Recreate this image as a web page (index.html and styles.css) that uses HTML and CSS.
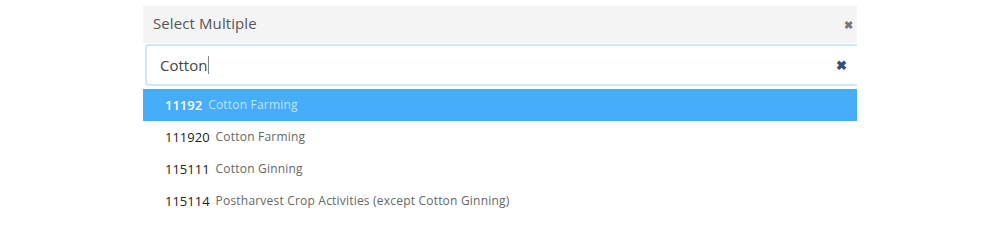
FILE: index.html
```html
<!DOCTYPE html>
<html>
<head>
<meta charset="utf-8">
<link rel="stylesheet" href="styles.css">
</head>
<body>
<div class="select">
  <div class="select-head">
    <span class="placeholder">Select Multiple</span>
    <span class="head-clear">&#10006;</span>
  </div>
  <div class="search-wrap">
    <div class="search">
      <span class="search-text">Cotton</span><span class="caret"></span>
      <span class="search-clear">&#10006;</span>
    </div>
  </div>
  <ul class="results">
    <li class="result active"><span class="code">11192</span><span class="desc">Cotton Farming</span></li>
    <li class="result"><span class="code">111920</span><span class="desc">Cotton Farming</span></li>
    <li class="result"><span class="code">115111</span><span class="desc">Cotton Ginning</span></li>
    <li class="result"><span class="code">115114</span><span class="desc">Postharvest Crop Activities (except Cotton Ginning)</span></li>
  </ul>
</div>
</body>
</html>
```
FILE: styles.css
```css
html, body {
  margin: 0;
  padding: 0;
  background: #ffffff;
}
body {
  font-family: "Open Sans", "Lato", sans-serif;
  padding-top: 6px;
}
.select {
  width: 714px;
  margin-left: 143px;
}
.select-head {
  height: 37px;
  background: #f4f4f4;
  display: flex;
  align-items: center;
  justify-content: space-between;
  padding: 0 4px 4px 10px;
  box-sizing: border-box;
}
.placeholder {
  font-size: 15px;
  letter-spacing: 0.1px;
  color: #555555;
}
.head-clear {
  font-size: 11px;
  color: #777777;
  font-weight: bold;
  margin-top: 3px;
}
.search-wrap {
  padding: 1px 0 3px 2px;
}
.search {
  border: 2px solid #cde7fb;
  border-right: none;
  border-radius: 4px 0 0 4px;
  display: flex;
  align-items: center;
  padding: 0 0 1px 13px;
  background: #fff;
  box-sizing: border-box;
  height: 42px;
}
.search-text {
  font-size: 15px;
  color: #444444;
}
.caret {
  width: 1px;
  height: 18px;
  background: #888;
  margin-left: 1px;
}
.search-clear {
  margin-left: auto;
  margin-right: 10px;
  font-size: 13px;
  color: #2f4d8c;
  font-weight: bold;
}
.results {
  list-style: none;
  margin: 0;
  padding: 0;
}
.result {
  height: 32px;
  display: flex;
  align-items: center;
  padding-left: 22px;
  padding-bottom: 1px;
  box-sizing: border-box;
}
.result.active {
  background: #46adfa;
}
.code {
  font-size: 13px;
  color: #222222;
  margin-right: 6px;
}
.desc {
  font-size: 12px;
  letter-spacing: 0.2px;
  color: #666666;
}
.active .code {
  color: #ffffff;
  font-weight: 600;
}
.active .desc {
  color: #c4e2fd;
}
```
